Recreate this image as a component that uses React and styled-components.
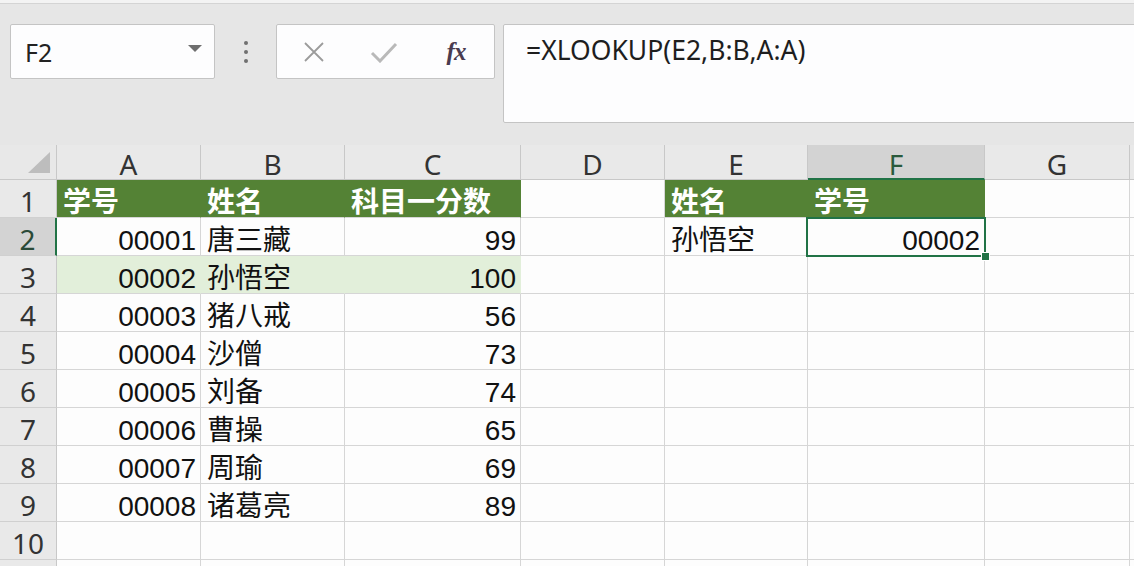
import React from "react";
import styled, { createGlobalStyle } from "styled-components";

const Global = createGlobalStyle`
  html, body { margin: 0; padding: 0; overflow: hidden; background: #fdfdfd; }
  body { width: 1134px; height: 566px; font-family: "Noto Sans", "Noto Sans CJK SC", sans-serif; }
`;

const GREEN = "#548235";
const LIGHT = "#e2efda";
const SEL = "#217346";
const GRID = "#d6d6d6";

const Page = styled.div`
  width: 1134px;
  height: 566px;
  overflow: hidden;
  display: flex;
  flex-direction: column;
`;

const Toolbar = styled.div`
  flex: 0 0 145px;
  height: 145px;
  box-sizing: border-box;
  background: #e6e6e6;
  border-top: 3px solid #f3f3f3;
  box-shadow: inset 0 1px 0 #d4d4d4;
  padding: 21px 0 0 10px;
  display: flex;
  align-items: flex-start;
`;

const Box = styled.div`
  box-sizing: border-box;
  background: #fdfdfe;
  border: 1px solid #c4c4c4;
  border-radius: 2px;
`;

const NameBox = styled(Box)`
  width: 205px;
  height: 55px;
  display: flex;
  align-items: center;
  justify-content: space-between;
  padding: 0 12px 0 14px;
  font-size: 25px;
  color: #222;
`;

const Caret = styled.span`
  width: 0;
  height: 0;
  border-left: 7px solid transparent;
  border-right: 7px solid transparent;
  border-top: 7px solid #6e6e6e;
  margin-top: -6px;
`;

const Grip = styled.div`
  width: 61px;
  height: 55px;
  display: flex;
  flex-direction: column;
  align-items: center;
  justify-content: center;
  gap: 5px;
`;

const Dot = styled.span`
  width: 4px;
  height: 4px;
  border-radius: 50%;
  background: #707070;
`;

const FxBox = styled(Box)`
  width: 219px;
  height: 55px;
  display: flex;
  align-items: center;
  padding-left: 26px;
`;

const IconSlot = styled.div`
  width: ${(p) => p.$w}px;
  display: flex;
  align-items: center;
  justify-content: center;
`;

const Fx = styled.span`
  font-family: "Liberation Serif", "DejaVu Serif", serif;
  font-style: italic;
  font-weight: 700;
  font-size: 25px;
  color: #4a3b4f;
  letter-spacing: -1px;
`;

const FormulaBox = styled(Box)`
  flex: 1;
  height: 99px;
  margin-left: 8px;
  margin-right: -6px;
  padding: 7px 0 0 22px;
  font-size: 26.5px;
  color: #1e1e1e;
`;

const Sheet = styled.div`
  display: grid;
  grid-template-columns: 57px 144px 144px 176px 144px 143px 177px 145px 1fr;
  grid-template-rows: 35px repeat(11, 38px);
  background: #fdfdfd;
`;

const Corner = styled.div`
  background: #e8e8e8;
  border-right: 1px solid #c8c8c8;
  border-bottom: 1px solid #c8c8c8;
  box-sizing: border-box;
  display: flex;
  align-items: flex-end;
  justify-content: flex-end;
  padding: 0 6px 6px 0;
`;

const ColHead = styled.div`
  box-sizing: border-box;
  background: ${(p) => (p.$sel ? "#d3d3d3" : "#e9e9e9")};
  border-right: 1px solid #c8c8c8;
  border-bottom: ${(p) => (p.$sel ? `2px solid ${SEL}` : "1px solid #c8c8c8")};
  display: flex;
  align-items: center;
  justify-content: center;
  padding-top: 4px;
  font-family: "Noto Sans", sans-serif;
  font-size: 28px;
  color: ${(p) => (p.$sel ? "#2a5a3c" : "#333")};
`;

const RowHead = styled.div`
  box-sizing: border-box;
  background: ${(p) => (p.$sel ? "#d3d3d3" : "#e9e9e9")};
  border-right: ${(p) => (p.$sel ? `2px solid ${SEL}` : "1px solid #c8c8c8")};
  border-bottom: 1px solid #d0d0d0;
  display: flex;
  align-items: center;
  justify-content: center;
  padding-top: 4px;
  font-family: "Noto Sans", sans-serif;
  font-size: 28px;
  color: ${(p) => (p.$sel ? "#2a4a38" : "#333")};
`;

const Cell = styled.div`
  position: relative;
  box-sizing: border-box;
  background: ${(p) => p.$fill || "#fdfdfd"};
  border-right: 1px solid ${(p) => p.$fill || GRID};
  border-bottom: 1px solid ${GRID};
  display: flex;
  align-items: flex-end;
  justify-content: ${(p) => (p.$right ? "flex-end" : "flex-start")};
  padding: ${(p) => (p.$right ? "0 4px 0 0" : "0 0 0 6px")};
  font-family: "Liberation Sans", "Noto Sans CJK SC", sans-serif;
  font-size: 28px;
  line-height: 1;
  white-space: nowrap;
  font-weight: ${(p) => (p.$bold ? 700 : 400)};
  color: ${(p) => (p.$bold ? "#ffffff" : "#111")};
`;

const Selection = styled.div`
  position: absolute;
  z-index: 2;
  top: -1px;
  left: -2px;
  right: -2px;
  bottom: -2px;
  border: 2px solid ${SEL};
  pointer-events: none;
`;

const Handle = styled.div`
  position: absolute;
  right: -6px;
  bottom: -6px;
  width: 7px;
  height: 7px;
  background: ${SEL};
  border: 1px solid #fff;
`;

const cols = ["A", "B", "C", "D", "E", "F", "G", ""];
const right = [true, false, true, false, false, true, false, false];

const data = [
  ["学号", "姓名", "科目一分数", "", "姓名", "学号", "", ""],
  ["00001", "唐三藏", "99", "", "孙悟空", "00002", "", ""],
  ["00002", "孙悟空", "100", "", "", "", "", ""],
  ["00003", "猪八戒", "56", "", "", "", "", ""],
  ["00004", "沙僧", "73", "", "", "", "", ""],
  ["00005", "刘备", "74", "", "", "", "", ""],
  ["00006", "曹操", "65", "", "", "", "", ""],
  ["00007", "周瑜", "69", "", "", "", "", ""],
  ["00008", "诸葛亮", "89", "", "", "", "", ""],
  ["", "", "", "", "", "", "", ""],
  ["", "", "", "", "", "", "", ""],
];

function fillFor(r, c) {
  if (r === 0 && [0, 1, 2, 4, 5].includes(c)) return GREEN;
  if (r === 2 && c <= 2) return LIGHT;
  return null;
}

export default function App() {
  return (
    <Page>
      <Global />
      <Toolbar>
        <NameBox>
          <span>F2</span>
          <Caret />
        </NameBox>
        <Grip>
          <Dot />
          <Dot />
          <Dot />
        </Grip>
        <FxBox>
          <IconSlot $w={22}>
            <svg width="22" height="22" viewBox="0 0 22 22">
              <path d="M2 2 L20 20 M20 2 L2 20" stroke="#9b9b9b" strokeWidth="1.8" fill="none" />
            </svg>
          </IconSlot>
          <IconSlot $w={118}>
            <svg width="28" height="22" viewBox="0 0 28 22">
              <path d="M2 12 L10 20 L26 3" stroke="#b9b9b9" strokeWidth="3" fill="none" />
            </svg>
          </IconSlot>
          <IconSlot $w={26}>
            <Fx>fx</Fx>
          </IconSlot>
        </FxBox>
        <FormulaBox>=XLOOKUP(E2,B:B,A:A)</FormulaBox>
      </Toolbar>
      <Sheet>
        <Corner>
          <svg width="22" height="21" viewBox="0 0 22 21">
            <path d="M22 0 L22 21 L0 21 Z" fill="#bdbdbd" />
          </svg>
        </Corner>
        {cols.map((c, i) => (
          <ColHead key={"h" + i} $sel={c === "F"}>
            {c}
          </ColHead>
        ))}
        {data.map((row, r) => (
          <React.Fragment key={"r" + r}>
            <RowHead $sel={r === 1}>{r < 10 ? r + 1 : ""}</RowHead>
            {row.map((v, c) => {
              const fill = fillFor(r, c);
              const isSel = r === 1 && c === 5;
              return (
                <Cell
                  key={c}
                  $fill={fill}
                  $right={r > 0 && right[c]}
                  $bold={r === 0 && fill === GREEN}
                >
                  {v}
                  {isSel && (
                    <Selection>
                      <Handle />
                    </Selection>
                  )}
                </Cell>
              );
            })}
          </React.Fragment>
        ))}
      </Sheet>
    </Page>
  );
}
